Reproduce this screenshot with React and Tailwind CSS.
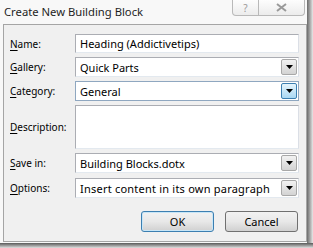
import React from "react";

const font = { fontFamily: '"Noto Sans", "Open Sans", Arial, sans-serif' };

function Arrow({ hot }) {
  return (
    <div
      className={
        "flex h-[16px] w-[16px] items-center justify-center rounded-[2px] border " +
        (hot
          ? "border-[#3c7fb1] bg-gradient-to-b from-[#e5f4fc] to-[#a9d8f3]"
          : "border-[#a8a8a8] bg-gradient-to-b from-[#f2f2f2] to-[#d3d3d3]")
      }
    >
      <svg width="7" height="4" viewBox="0 0 7 4">
        <path d="M0 0H7L3.5 4Z" fill="#000" />
      </svg>
    </div>
  );
}

function Combo({ text, hot, wide }) {
  return (
    <div
      className={
        "flex h-[20px] items-center justify-between border bg-white pl-[4px] pr-[1px] " +
        (hot ? "border-[#8fa7c0]" : "border-[#abadb3] border-b-[#e3e9ef] border-r-[#dbdfe6]")
      }
    >
      <span className={"text-[11px] leading-none text-black " + (wide ? "tracking-[0.22px]" : "")}>{text}</span>
      <Arrow hot={hot} />
    </div>
  );
}

function Label({ u, rest }) {
  return (
    <div className="flex items-center text-[10px] leading-none text-black">
      <span className="underline underline-offset-2">{u}</span>
      <span>{rest}</span>
    </div>
  );
}

export default function App() {
  return (
    <div className="h-[248px] w-[313px] overflow-hidden bg-white" style={font}>
      <div className="flex">
        <div className="flex h-[243px] w-[307px] flex-col bg-[#f8f8f8]">
          {/* title bar */}
          <div className="relative flex h-[24px] items-center pl-[4px]">
            <span className="text-[11.25px] leading-none text-[#1e1e1e]">Create New Building Block</span>
            <div className="absolute right-[2px] top-0 flex">
              <div className="flex h-[16px] w-[27px] items-center justify-center rounded-bl-[4px] border border-t-0 border-[#b9b9b9] bg-gradient-to-b from-[#fdfdfd] to-[#ececec] text-[10px] leading-none text-[#9a9a9a]">
                ?
              </div>
              <div className="flex h-[16px] w-[46px] items-center justify-center rounded-br-[4px] border border-l-0 border-t-0 border-[#b9b9b9] bg-gradient-to-b from-[#fdfdfd] to-[#ececec]">
                <svg width="11" height="9" viewBox="0 0 11 9">
                  <path d="M1 1L10 8M10 1L1 8" stroke="#9a9a9a" strokeWidth="2" fill="none" />
                </svg>
              </div>
            </div>
          </div>
          {/* client */}
          <div className="ml-[3px] flex h-[218px] flex-col border border-[#a5a5a5] bg-[#f0f0f0] pl-[6px] pr-[7px] pt-[9px]">
            <div className="grid grid-cols-[65px_224px] gap-y-[4px]">
              <Label u="N" rest="ame:" />
              <div className="flex h-[19px] items-center border border-[#abadb3] border-b-[#e3e9ef] border-r-[#dbdfe6] bg-white pl-[4px] text-[11px] leading-none text-black">
                Heading (Addictivetips)
              </div>
              <Label u="G" rest="allery:" />
              <Combo text="Quick Parts" />
              <Label u="C" rest="ategory:" />
              <Combo text="General" hot />
              <Label u="D" rest="escription:" />
              <div className="h-[44px] border border-[#abadb3] border-b-[#e3e9ef] border-r-[#dbdfe6] bg-white" />
              <Label u="S" rest="ave in:" />
              <Combo text="Building Blocks.dotx" />
              <Label u="O" rest="ptions:" />
              <div className="mt-[1px]">
                <Combo text="Insert content in its own paragraph" wide />
              </div>
            </div>
            <div className="mt-[13px] flex justify-end gap-[11px] pr-[1px]">
              <div className="flex h-[21px] w-[73px] items-center justify-center rounded-[3px] border border-[#3c7fb1] bg-gradient-to-b from-[#f2f2f2] via-[#e8e8e8] to-[#d0d0d0] text-[11px] leading-none text-black shadow-[inset_0_0_0_1px_#c8e6f7]">
                OK
              </div>
              <div className="flex h-[21px] w-[73px] items-center justify-center rounded-[3px] border border-[#707070] bg-gradient-to-b from-[#f2f2f2] via-[#e8e8e8] to-[#d0d0d0] text-[11px] leading-none text-black">
                Cancel
              </div>
            </div>
          </div>
        </div>
        <div className="h-[243px] w-[6px] bg-gradient-to-r from-[#6b6b6b] to-[#e8e8e8]" />
      </div>
      <div className="h-[5px] w-[313px] bg-gradient-to-b from-[#5a5a5a] to-[#e0e0e0]" />
    </div>
  );
}
